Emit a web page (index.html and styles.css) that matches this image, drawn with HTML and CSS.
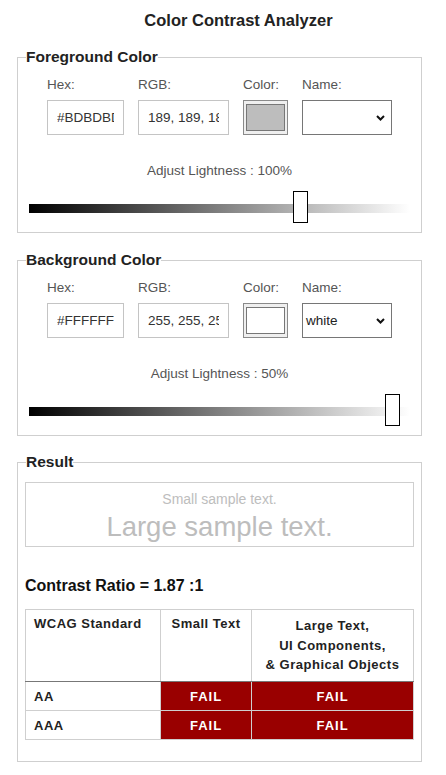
FILE: index.html
```html
<!DOCTYPE html>
<html lang="en">
<head>
<meta charset="utf-8">
<title>Color Contrast Analyzer</title>
<link rel="stylesheet" href="styles.css">
</head>
<body>
<h1 class="title">Color Contrast Analyzer</h1>

<fieldset class="panel panel-fg">
  <legend class="legend">Foreground Color</legend>
  <div class="fields">
    <div class="field">
      <label class="lbl" for="fg-hex">Hex:</label>
      <input id="fg-hex" class="box box-hex" type="text" value="#BDBDBD" readonly>
    </div>
    <div class="field">
      <label class="lbl" for="fg-rgb">RGB:</label>
      <input id="fg-rgb" class="box box-rgb" type="text" value="189, 189, 189" readonly>
    </div>
    <div class="field">
      <span class="lbl">Color:</span>
      <div class="swatch"><div class="swatch-fill fill-fg"></div></div>
    </div>
    <div class="field">
      <span class="lbl">Name:</span>
      <div class="select"><span class="select-val"></span>
        <svg class="chev" width="9" height="6" viewBox="0 0 9 6"><path d="M1 1 L4.5 4.5 L8 1" fill="none" stroke="#111" stroke-width="2"/></svg>
      </div>
    </div>
  </div>
  <div class="adjust">Adjust Lightness : 100%</div>
  <div class="slider">
    <div class="track"></div>
    <div class="thumb" style="left:264px"></div>
  </div>
</fieldset>

<fieldset class="panel panel-bg">
  <legend class="legend">Background Color</legend>
  <div class="fields">
    <div class="field">
      <label class="lbl" for="bg-hex">Hex:</label>
      <input id="bg-hex" class="box box-hex" type="text" value="#FFFFFF" readonly>
    </div>
    <div class="field">
      <label class="lbl" for="bg-rgb">RGB:</label>
      <input id="bg-rgb" class="box box-rgb" type="text" value="255, 255, 255" readonly>
    </div>
    <div class="field">
      <span class="lbl">Color:</span>
      <div class="swatch"><div class="swatch-fill fill-bg"></div></div>
    </div>
    <div class="field">
      <span class="lbl">Name:</span>
      <div class="select"><span class="select-val">white</span>
        <svg class="chev" width="9" height="6" viewBox="0 0 9 6"><path d="M1 1 L4.5 4.5 L8 1" fill="none" stroke="#111" stroke-width="2"/></svg>
      </div>
    </div>
  </div>
  <div class="adjust">Adjust Lightness : 50%</div>
  <div class="slider">
    <div class="track"></div>
    <div class="thumb" style="left:356px"></div>
  </div>
</fieldset>

<fieldset class="panel panel-result">
  <legend class="legend">Result</legend>
  <div class="sample">
    <div class="sample-small">Small sample text.</div>
    <div class="sample-large">Large sample text.</div>
  </div>
  <div class="ratio">Contrast Ratio = 1.87 :1</div>
  <table class="wcag">
    <thead>
      <tr>
        <th class="c1">WCAG Standard</th>
        <th class="c2">Small Text</th>
        <th class="c3">Large Text,<br>UI Components,<br>&amp; Graphical Objects</th>
      </tr>
    </thead>
    <tbody>
      <tr>
        <td class="lvl">AA</td>
        <td class="fail">FAIL</td>
        <td class="fail">FAIL</td>
      </tr>
      <tr>
        <td class="lvl">AAA</td>
        <td class="fail">FAIL</td>
        <td class="fail">FAIL</td>
      </tr>
    </tbody>
  </table>
</fieldset>
</body>
</html>
```

FILE: styles.css
```css
* { box-sizing: border-box; }

body {
  margin: 0;
  padding: 11px 0 0 0;
  width: 446px;
  background: #fff;
  font-family: "Liberation Sans", Arial, sans-serif;
  color: #222;
}

.title {
  margin: 0;
  padding-left: 31px;
  font-size: 16.5px;
  line-height: 19px;
  font-weight: bold;
  text-align: center;
  color: #222;
}

.panel {
  margin: 18px 0 0 17px;
  width: 405px;
  border: 1px solid #cfcfcf;
  padding: 0 7px 9px 7px;
  min-width: 0;
}

.panel-bg { margin-top: 18px; }
.panel-result { margin-top: 17px; padding-bottom: 21px; }

.legend {
  margin-left: 1px;
  padding: 0;
  font-size: 15.5px;
  line-height: 18px;
  font-weight: bold;
  color: #222;
}

.fields {
  display: flex;
  justify-content: center;
  gap: 14px;
  margin-top: 11px;
}

.field {
  display: flex;
  flex-direction: column;
  gap: 7px;
}

.lbl {
  font-size: 13.5px;
  line-height: 16px;
  color: #555;
}

.box {
  display: block;
  margin: 0;
  height: 35px;
  border: 1px solid #c4c4c4;
  border-radius: 0;
  background: #fff;
  font-family: "Liberation Sans", Arial, sans-serif;
  font-size: 13.5px;
  color: #333;
  padding: 0 9px;
  outline: none;
}

.box-hex { width: 77px; }
.box-rgb { width: 91px; }

.swatch {
  width: 45px;
  height: 35px;
  border: 1px solid #8a8a8a;
  background: #efefef;
  padding: 3px 2px;
}

.swatch-fill {
  width: 100%;
  height: 100%;
  border: 1px solid #777;
}

.fill-fg { background: #bdbdbd; }
.fill-bg { background: #ffffff; }

.select {
  width: 90px;
  height: 35px;
  border: 1px solid #767676;
  display: flex;
  align-items: center;
  justify-content: space-between;
  padding: 0 6px 0 3px;
  font-size: 13.5px;
  color: #222;
}

.chev { display: block; }

.adjust {
  margin-top: 28px;
  text-align: center;
  font-size: 13.5px;
  line-height: 16px;
  color: #555;
}

.slider {
  position: relative;
  height: 32px;
  margin: 12px 0 0 4px;
  width: 381px;
}

.track {
  position: absolute;
  left: 0;
  right: 0;
  top: 13px;
  height: 9px;
  background: linear-gradient(to right, #000 0%, #fff 100%);
}

.thumb {
  position: absolute;
  top: 0;
  width: 15px;
  height: 32px;
  background: #fff;
  border: 1.5px solid #000;
}

.sample {
  margin-top: 11px;
  height: 65px;
  border: 1px solid #cfcfcf;
  padding-top: 8px;
  text-align: center;
  color: #bdbdbd;
}

.sample-small {
  font-size: 14px;
  line-height: 16px;
}

.sample-large {
  margin-top: 4px;
  font-size: 27.5px;
  line-height: 31px;
}

.ratio {
  margin-top: 30px;
  font-size: 16px;
  line-height: 18px;
  font-weight: bold;
  color: #111;
}

.wcag {
  margin-top: 14px;
  width: 389px;
  border-collapse: collapse;
  font-size: 13px;
  letter-spacing: 0.5px;
  color: #222;
}

.wcag th {
  border: 1px solid #cfcfcf;
  border-bottom: 1px solid #777;
  font-weight: bold;
  line-height: 19.5px;
  height: 72px;
}

.wcag .c1 {
  width: 135px;
  text-align: left;
  vertical-align: top;
  padding: 4px 8px;
}

.wcag .c2 {
  width: 91px;
  text-align: center;
  vertical-align: top;
  padding: 4px 4px;
}

.wcag .c3 {
  text-align: center;
  vertical-align: middle;
  padding: 6px 4px;
}

.wcag td {
  border: 1px solid #cfcfcf;
  height: 29px;
  font-weight: bold;
  line-height: 15px;
  padding: 0 8px;
}

.wcag .fail {
  background: #990000;
  color: #fff;
  text-align: center;
  letter-spacing: 1px;
}
```
